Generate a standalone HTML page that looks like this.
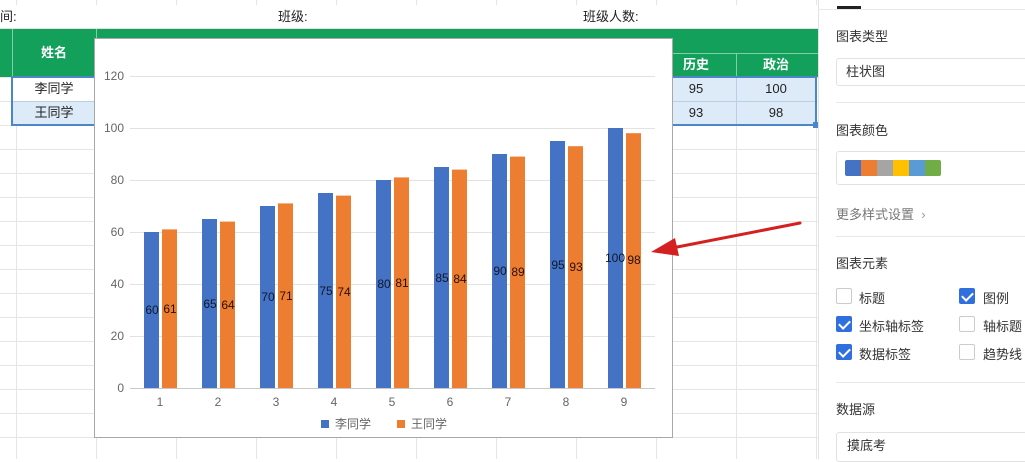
<!DOCTYPE html>
<html><head><meta charset="utf-8"><style>
*{margin:0;padding:0;box-sizing:border-box}
body{width:1025px;height:459px;overflow:hidden;background:#fff;font-family:"Liberation Sans","Noto Sans CJK SC",sans-serif;position:relative;font-size:13px;color:#222}
.a{position:absolute}
.grid{position:absolute;left:0;top:0;width:818px;height:459px;
background-image:linear-gradient(#e6e6e6 1px,transparent 1px),linear-gradient(90deg,#e6e6e6 1px,transparent 1px);
background-size:80px 24px,80px 24px;background-position:0 5px,16px 0}
.g{background:#12a05a;color:#fff;font-weight:bold;text-align:center}
.c{text-align:center;line-height:24px}
.cb{position:absolute;width:16px;height:16px;border:1px solid #ccc;border-radius:2px;background:#fff}
.ck{background:#2f6fde;border-color:#2f6fde}
.ck::after{content:"";position:absolute;left:4px;top:1px;width:5px;height:9px;border:solid #fff;border-width:0 2px 2px 0;transform:rotate(45deg)}
.lb{position:absolute;font-size:13px;color:#333}
.hd{position:absolute;left:836px;font-size:13px;color:#333}
.dv{position:absolute;left:836px;width:189px;height:1px;background:#e8e8e8}
</style></head><body>
<div class="grid"></div>
<div class="a" style="left:0;top:5px;width:818px;height:24px;background:#fff;border-bottom:1px solid #e3e3e3"></div>
<div class="a" style="left:0;top:5px;line-height:24px">间:</div>
<div class="a" style="left:278px;top:5px;line-height:24px">班级:</div>
<div class="a" style="left:583px;top:5px;line-height:24px">班级人数:</div>
<div class="a g" style="left:0;top:29px;width:818px;height:48px"></div>
<div class="a" style="left:12px;top:29px;width:1px;height:48px;background:#7fd0a8"></div>
<div class="a" style="left:96px;top:29px;width:1px;height:48px;background:#7fd0a8"></div>
<div class="a" style="left:96px;top:53px;width:722px;height:1px;background:#7fd0a8"></div>
<div class="a" style="left:736px;top:53px;width:1px;height:24px;background:#7fd0a8"></div>
<div class="a g" style="left:12px;top:41px;width:84px;line-height:24px;background:none">姓名</div>
<div class="a g" style="left:656px;top:53px;width:80px;line-height:24px;background:none">历史</div>
<div class="a g" style="left:736px;top:53px;width:80px;line-height:24px;background:none">政治</div>
<div class="a" style="left:12px;top:77px;width:805px;height:48px;background:#ddebf8"></div>
<div class="a" style="left:12px;top:77px;width:84px;height:24px;background:#fff"></div>
<div class="a" style="left:12px;top:101px;width:805px;height:1px;background:#b9cfe6"></div>
<div class="a" style="left:736px;top:77px;width:1px;height:48px;background:#b9cfe6"></div>
<div class="a" style="left:96px;top:77px;width:1px;height:48px;background:#b9cfe6"></div>
<div class="a" style="left:11px;top:76px;width:806px;height:50px;border:2px solid #4a86c8"></div>
<div class="a" style="left:813px;top:122px;width:6px;height:6px;background:#4a86c8"></div>
<div class="a c" style="left:12px;top:77px;width:84px">李同学</div>
<div class="a c" style="left:12px;top:101px;width:84px">王同学</div>
<div class="a c" style="left:656px;top:77px;width:80px">95</div>
<div class="a c" style="left:736px;top:77px;width:80px">100</div>
<div class="a c" style="left:656px;top:101px;width:80px">93</div>
<div class="a c" style="left:736px;top:101px;width:80px">98</div>

<svg class="a" style="left:94px;top:38px" width="579" height="400" viewBox="94 38 579 400" font-family="Liberation Sans, Noto Sans CJK SC, sans-serif" font-size="12">
<rect x="94.5" y="38.5" width="578" height="399" fill="#fff" stroke="#a8a8a8"/>
<g stroke="#e2e2e2"><line x1="130" x2="655" y1="76.5" y2="76.5"/><line x1="130" x2="655" y1="128.5" y2="128.5"/><line x1="130" x2="655" y1="180.5" y2="180.5"/><line x1="130" x2="655" y1="232.5" y2="232.5"/><line x1="130" x2="655" y1="284.5" y2="284.5"/><line x1="130" x2="655" y1="336.5" y2="336.5"/></g>
<line x1="130" x2="655" y1="388.5" y2="388.5" stroke="#c8c8c8"/>
<g fill="#666" text-anchor="end"><text x="124" y="80">120</text><text x="124" y="132">100</text><text x="124" y="184">80</text><text x="124" y="236">60</text><text x="124" y="288">40</text><text x="124" y="340">20</text><text x="124" y="392">0</text></g>
<g fill="#666" text-anchor="middle"><text x="160" y="406">1</text><text x="218" y="406">2</text><text x="276" y="406">3</text><text x="334" y="406">4</text><text x="392" y="406">5</text><text x="450" y="406">6</text><text x="508" y="406">7</text><text x="566" y="406">8</text><text x="624" y="406">9</text></g>
<rect x="321" y="420" width="8" height="8" fill="#4472c4"/><text x="335" y="428" fill="#666">李同学</text>
<rect x="397" y="420" width="8" height="8" fill="#ed7d31"/><text x="411" y="428" fill="#666">王同学</text>
<g>
<rect x="144" y="232" width="15" height="156" fill="#4472c4"/><rect x="162" y="229.4" width="15" height="158.6" fill="#ed7d31"/>
<rect x="202" y="219" width="15" height="169" fill="#4472c4"/><rect x="220" y="221.6" width="15" height="166.4" fill="#ed7d31"/>
<rect x="260" y="206" width="15" height="182" fill="#4472c4"/><rect x="278" y="203.4" width="15" height="184.6" fill="#ed7d31"/>
<rect x="318" y="193" width="15" height="195" fill="#4472c4"/><rect x="336" y="195.6" width="15" height="192.4" fill="#ed7d31"/>
<rect x="376" y="180" width="15" height="208" fill="#4472c4"/><rect x="394" y="177.4" width="15" height="210.6" fill="#ed7d31"/>
<rect x="434" y="167" width="15" height="221" fill="#4472c4"/><rect x="452" y="169.6" width="15" height="218.4" fill="#ed7d31"/>
<rect x="492" y="154" width="15" height="234" fill="#4472c4"/><rect x="510" y="156.6" width="15" height="231.4" fill="#ed7d31"/>
<rect x="550" y="141" width="15" height="247" fill="#4472c4"/><rect x="568" y="146.2" width="15" height="241.8" fill="#ed7d31"/>
<rect x="608" y="128" width="15" height="260" fill="#4472c4"/><rect x="626" y="133.2" width="15" height="254.8" fill="#ed7d31"/>
</g>
<g font-size="12" fill="#0d1830" text-anchor="middle">
<text x="152" y="314">60</text><text x="170" y="313" fill="#2a1005">61</text>
<text x="210" y="308">65</text><text x="228" y="309" fill="#2a1005">64</text>
<text x="268" y="301">70</text><text x="286" y="300" fill="#2a1005">71</text>
<text x="326" y="295">75</text><text x="344" y="296" fill="#2a1005">74</text>
<text x="384" y="288">80</text><text x="402" y="287" fill="#2a1005">81</text>
<text x="442" y="282">85</text><text x="460" y="283" fill="#2a1005">84</text>
<text x="500" y="275">90</text><text x="518" y="276" fill="#2a1005">89</text>
<text x="558" y="269">95</text><text x="576" y="271" fill="#2a1005">93</text>
<text x="615" y="262">100</text><text x="634" y="264" fill="#2a1005">98</text>
</g>
</svg>

<svg class="a" style="left:640px;top:210px" width="170" height="55" viewBox="640 210 170 55">
<line x1="800" y1="223" x2="672" y2="248" stroke="#d42020" stroke-width="3" stroke-linecap="round"/>
<polygon points="651,252 675,238 679,256" fill="#d42020"/>
</svg>

<div class="a" style="left:818px;top:0;width:207px;height:459px;background:#fff;border-left:1px solid #e3e3e3"></div>
<div class="a" style="left:818px;top:9px;width:207px;height:1px;background:#e8e8e8"></div>
<div class="a" style="left:837px;top:6px;width:24px;height:3px;background:#222"></div>
<div class="hd" style="top:26px">图表类型</div>
<div class="a" style="left:836px;top:58px;width:200px;height:28px;border:1px solid #e2e2e2;border-radius:3px;padding-left:9px;line-height:26px;font-size:13px;color:#333">柱状图</div>
<div class="dv" style="top:102px"></div>
<div class="hd" style="top:120px">图表颜色</div>
<div class="a" style="left:836px;top:151px;width:200px;height:34px;border:1px solid #e2e2e2;border-radius:3px"></div>
<div class="a" style="left:845px;top:160px;width:96px;height:16px;border-radius:2px;overflow:hidden;display:flex">
<span style="flex:1;background:#4472c4"></span><span style="flex:1;background:#ed7d31"></span><span style="flex:1;background:#a5a5a5"></span><span style="flex:1;background:#ffc000"></span><span style="flex:1;background:#5b9bd5"></span><span style="flex:1;background:#70ad47"></span></div>
<div class="hd" style="top:204px;color:#777">更多样式设置 &nbsp;<span style="color:#999">›</span></div>
<div class="dv" style="top:236px"></div>
<div class="hd" style="top:253px">图表元素</div>
<div class="cb" style="left:836px;top:288px"></div><div class="lb" style="left:859px;top:288px">标题</div>
<div class="cb ck" style="left:959px;top:288px"></div><div class="lb" style="left:983px;top:288px">图例</div>
<div class="cb ck" style="left:836px;top:316px"></div><div class="lb" style="left:859px;top:316px">坐标轴标签</div>
<div class="cb" style="left:959px;top:316px"></div><div class="lb" style="left:983px;top:316px">轴标题</div>
<div class="cb ck" style="left:836px;top:344px"></div><div class="lb" style="left:859px;top:344px">数据标签</div>
<div class="cb" style="left:959px;top:344px"></div><div class="lb" style="left:983px;top:344px">趋势线</div>
<div class="dv" style="top:382px"></div>
<div class="hd" style="top:399px">数据源</div>
<div class="a" style="left:836px;top:432px;width:200px;height:30px;border:1px solid #e2e2e2;border-radius:3px;padding-left:10px;line-height:26px;font-size:13px;color:#333">摸底考</div>
</body></html>
